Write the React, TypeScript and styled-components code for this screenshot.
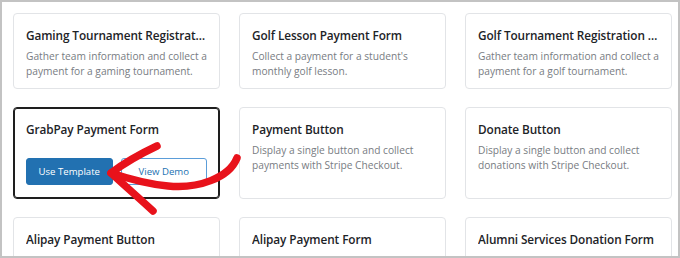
import styled, { createGlobalStyle } from 'styled-components'
import React from 'react'

const GLOBAL = createGlobalStyle`
    html, body {
        margin: 0;
        padding: 0;
        background: #ffffff;
    }
    body {
        font-family: "Open Sans", "Noto Sans", Arial, sans-serif;
        -webkit-font-smoothing: antialiased;
    }
`

const FRAME = styled.div`
    position: relative;
    box-sizing: border-box;
    width: 680px;
    height: 258px;
    border: 2px solid #c3c3c3;
    overflow: hidden;
    background: #fff;
    padding: 11px 0 0 11px;
`

const GRID = styled.div`
    display: grid;
    grid-template-columns: repeat(3, 207px);
    column-gap: 19px;
    row-gap: 18px;
`

const CARD = styled.div<{ selected?: boolean }>`
    box-sizing: border-box;
    display: flex;
    flex-direction: column;
    border: 1px solid ${p => (p.selected ? '#1e1e1e' : '#e2e4e7')};
    ${p => (p.selected ? 'box-shadow: inset 0 0 0 1px #1e1e1e;' : '')}
    border-radius: 4px;
    padding: 12px 12px ${p => (p.selected ? '13px' : '9px')};
    min-width: 0;
`

const TITLE = styled.div`
    font-size: 11.8px;
    line-height: 18px;
    font-weight: 600;
    letter-spacing: -0.1px;
    color: #1d2327;
    white-space: nowrap;
    overflow: hidden;
    text-overflow: ellipsis;
`

const DESC = styled.div`
    margin-top: 5px;
    font-size: 10.2px;
    line-height: 15px;
    color: #787c82;
`

const BUTTONS = styled.div`
    display: flex;
    gap: 8px;
    margin-top: 20px;
`

const BUTTON = styled.button<{ primary?: boolean }>`
    box-sizing: border-box;
    width: 87px;
    height: 27px;
    padding: 0;
    border-radius: 3px;
    font-family: inherit;
    font-size: 9.6px;
    font-weight: 500;
    cursor: pointer;
    border: 1px solid ${p => (p.primary ? '#2271b1' : '#5b9dd9')};
    background: ${p => (p.primary ? '#2271b1' : '#ffffff')};
    color: ${p => (p.primary ? '#ffffff' : '#2271b1')};
`

const ARROW = styled.svg`
    position: absolute;
    left: 0;
    top: 0;
    pointer-events: none;
`

interface Template {
    title: string;
    desc: string;
    selected?: boolean;
}

const TEMPLATES: Template[] = [
    { title: 'Gaming Tournament Registration Form', desc: 'Gather team information and collect a payment for a gaming tournament.' },
    { title: 'Golf Lesson Payment Form', desc: "Collect a payment for a student's monthly golf lesson." },
    { title: 'Golf Tournament Registration Form', desc: 'Gather team information and collect a payment for a golf tournament.' },
    { title: 'GrabPay Payment Form', desc: 'Collect payments from customers using GrabPay.', selected: true },
    { title: 'Payment Button', desc: 'Display a single button and collect payments with Stripe Checkout.' },
    { title: 'Donate Button', desc: 'Display a single button and collect donations with Stripe Checkout.' },
    { title: 'Alipay Payment Button', desc: 'Collect a payment with a single Alipay button.' },
    { title: 'Alipay Payment Form', desc: 'Allow customers to pay using Alipay.' },
    { title: 'Alumni Services Donation Form', desc: 'Collect donations for alumni services.' },
]

export default function App() {
    return (
        <FRAME>
            <GLOBAL />
            <GRID>
                {TEMPLATES.map(t => (
                    <CARD key={t.title} selected={t.selected}>
                        <TITLE>{t.title}</TITLE>
                        {t.selected ? (
                            <BUTTONS>
                                <BUTTON primary>Use Template</BUTTON>
                                <BUTTON>View Demo</BUTTON>
                            </BUTTONS>
                        ) : (
                            <DESC>{t.desc}</DESC>
                        )}
                    </CARD>
                ))}
            </GRID>
            {/* hand drawn red arrow pointing at the button */}
            <ARROW width="680" height="258" viewBox="0 0 680 258">
                <g fill="none" stroke="#e8121b" strokeWidth="7.5" strokeLinecap="round" strokeLinejoin="round">
                    <path d="M235 156 C227 176 196 187 166 184 C144 182 124 176 109 171" />
                    <path d="M155 144 C138 152 121 162 109 171 C122 183 138 197 151 209" />
                </g>
            </ARROW>
        </FRAME>
    )
}
